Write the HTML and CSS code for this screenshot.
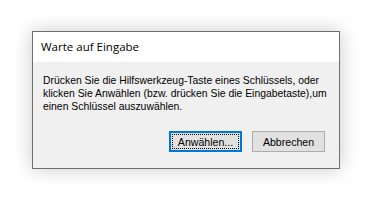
FILE: index.html
```html
<!DOCTYPE html>
<html lang="de">
<head>
<meta charset="utf-8">
<link rel="stylesheet" href="styles.css">
</head>
<body>
<div class="dialog">
  <div class="title">Warte auf Eingabe</div>
  <div class="content">
    <p class="msg">Drücken Sie die Hilfswerkzeug-Taste eines Schlüssels, oder<br>klicken Sie Anwählen (bzw. drücken Sie die Eingabetaste),um<br>einen Schlüssel auszuwählen.</p>
    <div class="buttons">
      <button class="btn default"><span class="focus">Anwählen...</span></button>
      <button class="btn">Abbrechen</button>
    </div>
  </div>
</div>
</body>
</html>
```

FILE: styles.css
```css
html, body {
  margin: 0;
  padding: 0;
  background: #ffffff;
}
body {
  width: 375px;
  height: 207px;
  padding: 31px 0 0 32px;
  box-sizing: border-box;
  font-family: "Liberation Sans", Arial, sans-serif;
}
.dialog {
  width: 308px;
  height: 138px;
  box-sizing: border-box;
  border: 1px solid #707070;
  background: #f0f0f0;
  box-shadow: 0 0 18px rgba(0, 0, 0, 0.22);
  display: flex;
  flex-direction: column;
}
.title {
  height: 30px;
  background: #ffffff;
  font-family: "Open Sans", "Noto Sans", sans-serif;
  font-size: 11.5px;
  color: #000;
  padding-left: 8px;
  line-height: 30px;
}
.content {
  flex: 1;
  display: flex;
  flex-direction: column;
  padding: 12px 0 0 10px;
}
.msg {
  margin: 0;
  font-size: 10.4px;
  line-height: 13px;
  color: #000;
  white-space: nowrap;
}
.buttons {
  display: flex;
  gap: 10px;
  margin-top: 18px;
  padding-left: 126px;
}
.btn {
  width: 73px;
  height: 21px;
  box-sizing: border-box;
  border: 1px solid #adadad;
  background: #e1e1e1;
  font-family: "Liberation Sans", Arial, sans-serif;
  font-size: 10.6px;
  color: #000;
  padding: 0;
  margin: 0;
  display: flex;
  align-items: center;
  justify-content: center;
}
.btn.default {
  border: 2px solid #0078d7;
  padding: 1px;
}
.focus {
  flex: 1;
  align-self: stretch;
  display: flex;
  align-items: center;
  justify-content: center;
  border: 1px dotted #000;
}
```
